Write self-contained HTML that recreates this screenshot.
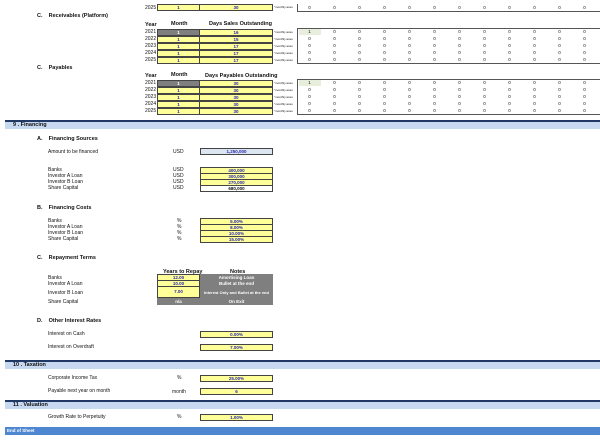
<!DOCTYPE html>
<html><head><meta charset="utf-8"><style>
*{margin:0;padding:0;box-sizing:border-box}
body{width:600px;height:440px;background:#fff;position:relative;overflow:hidden;font-family:"Liberation Sans",sans-serif;font-size:5px;color:#111}
.t{position:absolute;white-space:nowrap;line-height:6px;font-size:5px}
.h{font-weight:bold;font-size:5.5px}
.b{position:absolute;border:1px solid #444;background:#ffff99;color:#2a2ab0;text-align:center;font-weight:bold;font-size:4.5px;line-height:5px;white-space:nowrap}
.g{background:#7f7f7f;color:#fff}
.z{position:absolute;left:297px;width:303px;height:7px;display:flex;font-size:4.5px;line-height:7px}
.z span{width:25px;text-align:center}
.ma{position:absolute;left:274px;font-size:3px;line-height:7px;white-space:nowrap}
.bar{position:absolute;left:5px;width:595px;height:9px;background:#c6d9f1;border-top:2px solid #1f3864;font-weight:bold;font-size:5.5px;line-height:7px;padding-left:8px}
.frame{position:absolute;left:297px;width:303px;border-left:1px solid #555;border-bottom:1px solid #555;border-top:1px solid #555}
</style></head><body>

<!-- top row 2025 -->
<div class="t" style="left:145px;top:5px">2025</div>
<div class="b" style="left:157px;top:4px;width:43px;height:7px">1</div>
<div class="b" style="left:199px;top:4px;width:74px;height:7px">30</div>
<div class="ma" style="top:4px">"monthly assu</div>
<div class="frame" style="top:4px;height:8px;border-top:none"></div>
<div class="z" style="top:4px"><span>0</span><span>0</span><span>0</span><span>0</span><span>0</span><span>0</span><span>0</span><span>0</span><span>0</span><span>0</span><span>0</span><span>0</span></div>

<!-- Receivables -->
<div class="t h" style="left:37px;top:13px">C.&nbsp;&nbsp;&nbsp;&nbsp;Receivables (Platform)</div>
<div class="t h" style="left:145px;top:22px">Year</div>
<div class="t h" style="left:171px;top:21px">Month</div>
<div class="t h" style="left:209px;top:21px">Days Sales Outstanding</div>
<div class="frame" style="top:28px;height:36px"></div>
<div class="t" style="left:145px;top:29px">2021</div><div class="b g" style="left:157px;top:29px;width:43px;height:7px">1</div><div class="b" style="left:199px;top:29px;width:74px;height:7px">16</div><div class="ma" style="top:29px">"monthly assu</div>
<div class="t" style="left:145px;top:36px">2022</div><div class="b" style="left:157px;top:36px;width:43px;height:7px">1</div><div class="b" style="left:199px;top:36px;width:74px;height:7px">15</div><div class="ma" style="top:36px">"monthly assu</div>
<div class="t" style="left:145px;top:43px">2023</div><div class="b" style="left:157px;top:43px;width:43px;height:7px">1</div><div class="b" style="left:199px;top:43px;width:74px;height:7px">17</div><div class="ma" style="top:43px">"monthly assu</div>
<div class="t" style="left:145px;top:50px">2024</div><div class="b" style="left:157px;top:50px;width:43px;height:7px">1</div><div class="b" style="left:199px;top:50px;width:74px;height:7px">17</div><div class="ma" style="top:50px">"monthly assu</div>
<div class="t" style="left:145px;top:57px">2025</div><div class="b" style="left:157px;top:57px;width:43px;height:7px">1</div><div class="b" style="left:199px;top:57px;width:74px;height:7px">17</div><div class="ma" style="top:57px">"monthly assu</div>
<div style="position:absolute;left:299px;top:29px;width:22px;height:6px;background:#e8eedc"></div>
<div class="z" style="top:28px"><span>1</span><span>0</span><span>0</span><span>0</span><span>0</span><span>0</span><span>0</span><span>0</span><span>0</span><span>0</span><span>0</span><span>0</span></div>
<div class="z" style="top:35px"><span>0</span><span>0</span><span>0</span><span>0</span><span>0</span><span>0</span><span>0</span><span>0</span><span>0</span><span>0</span><span>0</span><span>0</span></div>
<div class="z" style="top:42px"><span>0</span><span>0</span><span>0</span><span>0</span><span>0</span><span>0</span><span>0</span><span>0</span><span>0</span><span>0</span><span>0</span><span>0</span></div>
<div class="z" style="top:49px"><span>0</span><span>0</span><span>0</span><span>0</span><span>0</span><span>0</span><span>0</span><span>0</span><span>0</span><span>0</span><span>0</span><span>0</span></div>
<div class="z" style="top:56px"><span>0</span><span>0</span><span>0</span><span>0</span><span>0</span><span>0</span><span>0</span><span>0</span><span>0</span><span>0</span><span>0</span><span>0</span></div>

<!-- Payables -->
<div class="t h" style="left:37px;top:65px">C.&nbsp;&nbsp;&nbsp;&nbsp;Payables</div>
<div class="t h" style="left:145px;top:73px">Year</div>
<div class="t h" style="left:171px;top:72px">Month</div>
<div class="t h" style="left:205px;top:73px">Days Payables Outstanding</div>
<div class="frame" style="top:79px;height:36px"></div>
<div class="t" style="left:145px;top:80px">2021</div><div class="b g" style="left:157px;top:80px;width:43px;height:7px">1</div><div class="b" style="left:199px;top:80px;width:74px;height:7px">30</div><div class="ma" style="top:80px">"monthly assu</div>
<div class="t" style="left:145px;top:87px">2022</div><div class="b" style="left:157px;top:87px;width:43px;height:7px">1</div><div class="b" style="left:199px;top:87px;width:74px;height:7px">30</div><div class="ma" style="top:87px">"monthly assu</div>
<div class="t" style="left:145px;top:94px">2023</div><div class="b" style="left:157px;top:94px;width:43px;height:7px">1</div><div class="b" style="left:199px;top:94px;width:74px;height:7px">30</div><div class="ma" style="top:94px">"monthly assu</div>
<div class="t" style="left:145px;top:101px">2024</div><div class="b" style="left:157px;top:101px;width:43px;height:7px">1</div><div class="b" style="left:199px;top:101px;width:74px;height:7px">30</div><div class="ma" style="top:101px">"monthly assu</div>
<div class="t" style="left:145px;top:108px">2025</div><div class="b" style="left:157px;top:108px;width:43px;height:7px">1</div><div class="b" style="left:199px;top:108px;width:74px;height:7px">30</div><div class="ma" style="top:108px">"monthly assu</div>
<div style="position:absolute;left:299px;top:80px;width:22px;height:6px;background:#e8eedc"></div>
<div class="z" style="top:79px"><span>1</span><span>0</span><span>0</span><span>0</span><span>0</span><span>0</span><span>0</span><span>0</span><span>0</span><span>0</span><span>0</span><span>0</span></div>
<div class="z" style="top:86px"><span>0</span><span>0</span><span>0</span><span>0</span><span>0</span><span>0</span><span>0</span><span>0</span><span>0</span><span>0</span><span>0</span><span>0</span></div>
<div class="z" style="top:93px"><span>0</span><span>0</span><span>0</span><span>0</span><span>0</span><span>0</span><span>0</span><span>0</span><span>0</span><span>0</span><span>0</span><span>0</span></div>
<div class="z" style="top:100px"><span>0</span><span>0</span><span>0</span><span>0</span><span>0</span><span>0</span><span>0</span><span>0</span><span>0</span><span>0</span><span>0</span><span>0</span></div>
<div class="z" style="top:107px"><span>0</span><span>0</span><span>0</span><span>0</span><span>0</span><span>0</span><span>0</span><span>0</span><span>0</span><span>0</span><span>0</span><span>0</span></div>

<!-- 9 Financing -->
<div class="bar" style="top:120px">9 . Financing</div>
<div class="t h" style="left:37px;top:136px">A.&nbsp;&nbsp;&nbsp;&nbsp;Financing Sources</div>
<div class="t" style="left:48px;top:149px">Amount to be financed</div>
<div class="t" style="left:173px;top:149px">USD</div>
<div class="b" style="left:200px;top:148px;width:73px;height:7px;background:#dce6f1">1,250,000</div>

<div class="t" style="left:48px;top:167px">Banks</div><div class="t" style="left:173px;top:167px">USD</div>
<div class="t" style="left:48px;top:173px">Investor A Loan</div><div class="t" style="left:173px;top:173px">USD</div>
<div class="t" style="left:48px;top:179px">Investor B Loan</div><div class="t" style="left:173px;top:179px">USD</div>
<div class="t" style="left:48px;top:185px">Share Capital</div><div class="t" style="left:173px;top:185px">USD</div>
<div class="b" style="left:200px;top:167px;width:73px;height:7px">400,000</div>
<div class="b" style="left:200px;top:173px;width:73px;height:7px">300,000</div>
<div class="b" style="left:200px;top:179px;width:73px;height:7px">270,000</div>
<div class="b" style="left:200px;top:185px;width:73px;height:7px;background:#fff;color:#111">680,000</div>

<div class="t h" style="left:37px;top:205px">B.&nbsp;&nbsp;&nbsp;&nbsp;Financing Costs</div>
<div class="t" style="left:48px;top:218px">Banks</div><div class="t" style="left:177px;top:218px">%</div>
<div class="t" style="left:48px;top:224px">Investor A Loan</div><div class="t" style="left:177px;top:224px">%</div>
<div class="t" style="left:48px;top:230px">Investor B Loan</div><div class="t" style="left:177px;top:230px">%</div>
<div class="t" style="left:48px;top:236px">Share Capital</div><div class="t" style="left:177px;top:236px">%</div>
<div class="b" style="left:200px;top:218px;width:73px;height:7px">5.00%</div>
<div class="b" style="left:200px;top:224px;width:73px;height:7px">8.00%</div>
<div class="b" style="left:200px;top:230px;width:73px;height:7px">10.00%</div>
<div class="b" style="left:200px;top:236px;width:73px;height:7px">15.00%</div>

<div class="t h" style="left:37px;top:255px">C.&nbsp;&nbsp;&nbsp;&nbsp;Repayment Terms</div>
<div class="t h" style="left:163px;top:269px">Years to Repay</div>
<div class="t h" style="left:230px;top:269px">Notes</div>
<div style="position:absolute;left:157px;top:274px;width:116px;height:31px;background:#7f7f7f"></div>
<div class="t" style="left:48px;top:275px">Banks</div>
<div class="t" style="left:48px;top:281px">Investor A Loan</div>
<div class="t" style="left:48px;top:290px">Investor B Loan</div>
<div class="t" style="left:48px;top:299px">Share Capital</div>
<div class="b" style="left:157px;top:274px;width:43px;height:7px">12.00</div>
<div class="b" style="left:157px;top:280px;width:43px;height:7px">10.00</div>
<div class="b" style="left:157px;top:286px;width:43px;height:12px;line-height:10px">7.00</div>
<div class="t" style="left:157px;top:299px;width:43px;text-align:center;color:#fff;font-weight:bold;font-size:4.5px">n/a</div>
<div class="t" style="left:200px;top:275px;width:73px;text-align:center;color:#fff;font-weight:bold;font-size:4.5px">Amortising Loan</div>
<div class="t" style="left:200px;top:281px;width:73px;text-align:center;color:#fff;font-weight:bold;font-size:4.5px">Bullet at the end</div>
<div class="t" style="left:200px;top:290px;width:73px;text-align:center;color:#fff;font-weight:bold;font-size:4px">Interest Only and Bullet at the end</div>
<div class="t" style="left:200px;top:299px;width:73px;text-align:center;color:#fff;font-weight:bold;font-size:4.5px">On Exit</div>

<div class="t h" style="left:37px;top:318px">D.&nbsp;&nbsp;&nbsp;&nbsp;Other Interest Rates</div>
<div class="t" style="left:48px;top:331px">Interest on Cash</div>
<div class="b" style="left:200px;top:331px;width:73px;height:7px">0.00%</div>
<div class="t" style="left:48px;top:344px">Interest on Overdraft</div>
<div class="b" style="left:200px;top:344px;width:73px;height:7px">7.00%</div>

<div class="bar" style="top:360px">10 . Taxation</div>
<div class="t" style="left:48px;top:375px">Corporate Income Tax</div><div class="t" style="left:177px;top:375px">%</div>
<div class="b" style="left:200px;top:375px;width:73px;height:7px">25.00%</div>
<div class="t" style="left:48px;top:388px">Payable next year on month</div><div class="t" style="left:172px;top:389px">month</div>
<div class="b" style="left:200px;top:388px;width:73px;height:7px">6</div>

<div class="bar" style="top:400px">11 . Valuation</div>
<div class="t" style="left:48px;top:414px">Growth Rate to Perpetuity</div><div class="t" style="left:177px;top:414px">%</div>
<div class="b" style="left:200px;top:414px;width:73px;height:7px">1.00%</div>

<div style="position:absolute;left:5px;top:427px;width:595px;height:8px;background:#4f86d0;color:#fff;font-weight:bold;font-size:4.5px;line-height:8px;padding-left:2px">End of Sheet</div>
</body></html>
